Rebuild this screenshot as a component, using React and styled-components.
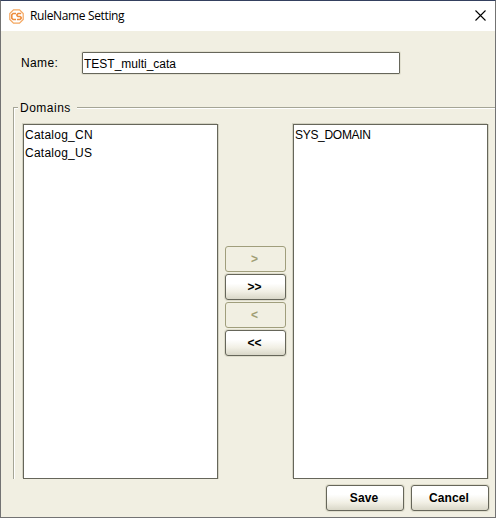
import React from "react";
import styled, { createGlobalStyle } from "styled-components";

const GlobalStyle = createGlobalStyle`
  * { box-sizing: border-box; }
  body { margin: 0; background: #f1efe2; }
`;

const Dialog = styled.main`
  display: flex;
  flex-direction: column;
  width: 496px;
  height: 518px;
  border: 1px solid #737373;
  border-top-color: #34405f;
  background: #f1efe2;
  color: #000;
  font: 12px/18px "Liberation Sans", Arial, sans-serif;
  overflow: hidden;
`;

const TitleBar = styled.header`
  display: flex;
  align-items: center;
  height: 30px;
  padding: 0 9px 0 8px;
  background: #fff;
`;

const Title = styled.h1`
  flex: 1;
  margin: 0 0 0 6px;
  font: 12px/30px "Open Sans", sans-serif;
  letter-spacing: -0.36px;
`;

const CloseButton = styled.button`
  display: flex;
  margin-top: -2px;
  padding: 0;
  border: 0;
  background: none;
`;

const NameRow = styled.label`
  display: flex;
  align-items: center;
  height: 24px;
  margin: 20px 0 0 20px;
`;

const NameLabel = styled.span`
  width: 61px;
  letter-spacing: 0.35px;
`;

const NameInput = styled.input`
  width: 318px;
  height: 22px;
  padding: 1px 1px 0;
  border: 1px solid #66665a;
  border-radius: 1px;
  outline: 0;
  background: #fff;
  box-shadow: 0 0 0 1px #e2e0d0;
  color: #000;
  font: inherit;
  letter-spacing: 0;
`;

const DomainGroup = styled.section`
  display: flex;
  flex-direction: column;
  height: 380px;
  margin: 24px 0 0 12px;
`;

const GroupHeading = styled.div`
  display: flex;
  align-items: center;
  height: 18px;
`;

const Rule = styled.span`
  height: 2px;
  width: ${(p) => p.$width || "auto"};
  flex: ${(p) => (p.$width ? "none" : 1)};
  border-top: 1px solid #a5a596;
  background: #fff;
`;

const GroupTitle = styled.h2`
  width: 59px;
  margin: 0;
  padding-left: 2px;
  font: inherit;
  letter-spacing: 0.5px;
`;

const GroupBody = styled.div`
  display: flex;
  height: 371px;
  margin-top: -9px;
  padding: 16px 7px 0 9px;
  border-left: 1px solid #a5a596;
  box-shadow: inset 1px 0 #fff;
`;

const DomainList = styled.ul`
  width: 195px;
  height: 355px;
  margin: 0;
  padding: 1px;
  list-style: none;
  border: 1px solid #66665a;
  box-shadow: -1px -1px #d3d2c2, 1px 0 #d3d2c2;
  background: #fff;
`;

const DomainItem = styled.li`
  height: 18px;
  white-space: nowrap;
  letter-spacing: ${(p) => p.$spacing};
`;

const TransferControls = styled.div`
  display: flex;
  flex-direction: column;
  align-items: center;
  width: 75px;
  gap: 2px;
  padding-top: 122px;
`;

const Button = styled.button`
  width: ${(p) => p.$width}px;
  height: 26px;
  padding: 0 2px 0 0;
  border: 1px solid #66665a;
  border-radius: 3px;
  background: linear-gradient(#fff 0%, #fff 35%, #f1efe4 70%, #d9d7c8 100%);
  box-shadow: 0 0 0 1px #dedccb;
  color: #000;
  font: bold 12px/24px "Liberation Sans", Arial, sans-serif;
  letter-spacing: 0.1px;

  &:disabled {
    border-color: #a09e7c;
    background: #f1efe2;
    box-shadow: none;
    color: #a09e74;
  }
`;

const Actions = styled.footer`
  display: flex;
  justify-content: flex-end;
  gap: 7px;
  padding: 6px 6px 0 0;
`;

const AppIcon = () => (
  <svg width="15" height="15" viewBox="0 0 15 15" fill="none" aria-hidden="true">
    <path d="M4.5.8h6L14.2 4.5v6l-3.7 3.7h-6L.8 10.5v-6z" stroke="#f4a65f" strokeWidth="1.2" />
    <path d="M7 4.5H4.1L2.8 5.8v3.4l1.3 1.3H7M12.2 4.5H9.1L8 5.6v1l1 .9h2l1.1.9v1L11 10.5H8" stroke="#ed8c3d" strokeWidth="1.6" />
  </svg>
);

const CloseIcon = () => (
  <svg width="11" height="11" viewBox="0 0 11 11" aria-hidden="true">
    <path d="m.5.5 10 10m0-10-10 10" stroke="#000" strokeWidth="1.1" />
  </svg>
);

const transfers = [
  { text: ">", disabled: true },
  { text: ">>" },
  { text: "<", disabled: true },
  { text: "<<" },
];

export default function App() {
  return (
    <>
      <GlobalStyle />
      <Dialog>
        <TitleBar>
          <AppIcon />
          <Title>RuleName Setting</Title>
          <CloseButton aria-label="Close"><CloseIcon /></CloseButton>
        </TitleBar>
        <NameRow>
          <NameLabel>Name:</NameLabel>
          <NameInput defaultValue="TEST_multi_cata" />
        </NameRow>
        <DomainGroup>
          <GroupHeading>
            <Rule $width="5px" />
            <GroupTitle>Domains</GroupTitle>
            <Rule />
          </GroupHeading>
          <GroupBody>
            <DomainList>
              <DomainItem $spacing="0.25px">Catalog_CN</DomainItem>
              <DomainItem $spacing="0.25px">Catalog_US</DomainItem>
            </DomainList>
            <TransferControls>
              {transfers.map(({ text, disabled }) => (
                <Button key={text} $width={61} disabled={disabled}>{text}</Button>
              ))}
            </TransferControls>
            <DomainList>
              <DomainItem $spacing="-0.3px">SYS_DOMAIN</DomainItem>
            </DomainList>
          </GroupBody>
        </DomainGroup>
        <Actions>
          <Button $width={78}>Save</Button>
          <Button $width={78}>Cancel</Button>
        </Actions>
      </Dialog>
    </>
  );
}
